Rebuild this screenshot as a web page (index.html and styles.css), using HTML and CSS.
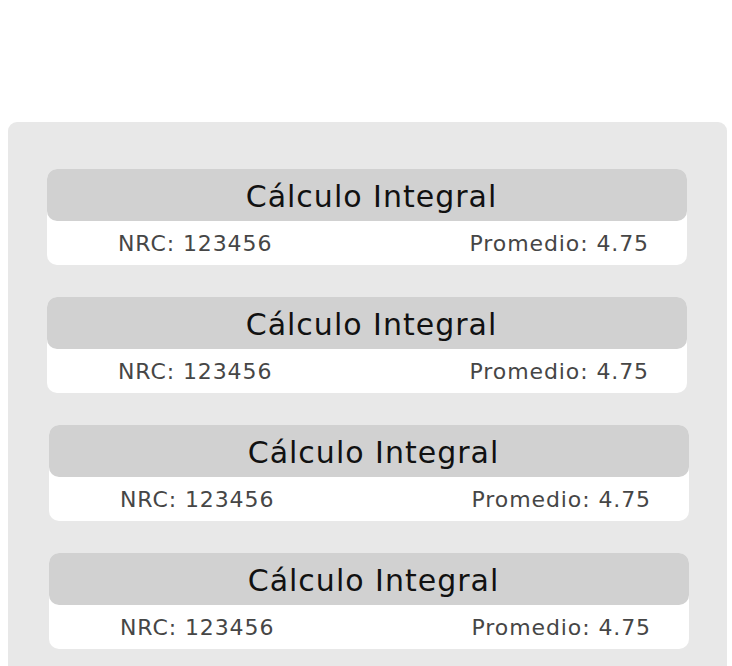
FILE: index.html
```html
<!DOCTYPE html>
<html lang="es">
<head>
<meta charset="utf-8">
<title>Cursos</title>
<link rel="stylesheet" href="styles.css">
</head>
<body>
<main class="page">
  <section class="panel">
    <article class="card">
      <h2 class="card-title">Cálculo Integral</h2>
      <div class="card-info"><span>NRC: 123456</span><span>Promedio: 4.75</span></div>
    </article>
    <article class="card">
      <h2 class="card-title">Cálculo Integral</h2>
      <div class="card-info"><span>NRC: 123456</span><span>Promedio: 4.75</span></div>
    </article>
    <article class="card card-shift">
      <h2 class="card-title">Cálculo Integral</h2>
      <div class="card-info"><span>NRC: 123456</span><span>Promedio: 4.75</span></div>
    </article>
    <article class="card card-shift">
      <h2 class="card-title">Cálculo Integral</h2>
      <div class="card-info"><span>NRC: 123456</span><span>Promedio: 4.75</span></div>
    </article>
  </section>
</main>
</body>
</html>
```
FILE: styles.css
```css
html, body {
  margin: 0;
  padding: 0;
  background: #ffffff;
  overflow: hidden;
}
body {
  font-family: "DejaVu Sans", "Noto Sans", sans-serif;
}
.page {
  padding: 122px 0 0 8px;
}
.panel {
  width: 719px;
  min-height: 600px;
  box-sizing: border-box;
  background: #e8e8e8;
  border-radius: 9px;
  padding: 47px 0 0 39px;
  display: flex;
  flex-direction: column;
  gap: 32px;
}
.card {
  width: 640px;
  height: 96px;
  background: #ffffff;
  border-radius: 10px;
  display: flex;
  flex-direction: column;
}
.card-shift {
  margin-left: 2px;
}
.card-title {
  margin: 0;
  height: 52px;
  flex: none;
  padding: 2px 0 0 9px;
  box-sizing: border-box;
  background: #d1d1d1;
  border-radius: 10px;
  display: flex;
  align-items: center;
  justify-content: center;
  font-size: 30px;
  font-weight: 400;
  letter-spacing: 1px;
  color: #111111;
}
.card-info {
  flex: 1;
  display: flex;
  align-items: center;
  justify-content: space-between;
  padding: 0 38px 0 71px;
  font-size: 22px;
  letter-spacing: 0.9px;
  color: #464646;
}
```
